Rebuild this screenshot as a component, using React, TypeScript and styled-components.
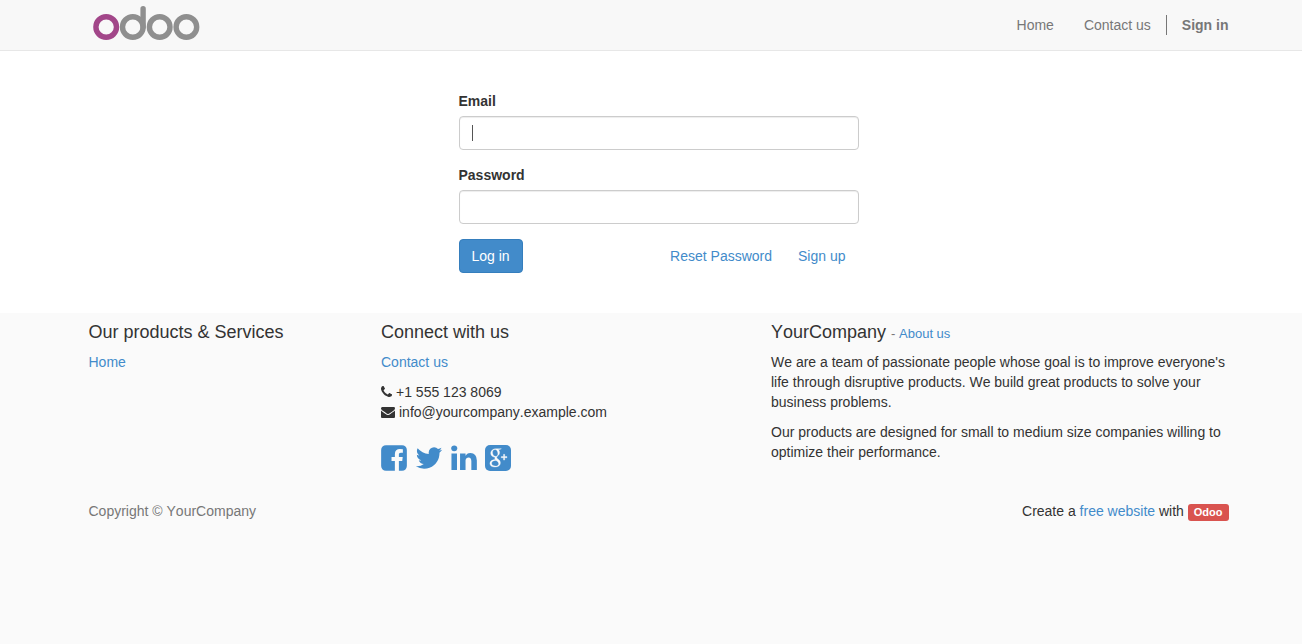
import React from 'react';
import styled, { createGlobalStyle } from 'styled-components';

const GlobalStyle = createGlobalStyle`
  *, *::before, *::after { box-sizing: border-box; }
  html { background: #fafafa; }
  body {
    margin: 0;
    font-family: "Liberation Sans", Arial, sans-serif;
    font-size: 14px;
    line-height: 20px;
    font-kerning: none;
    color: #333;
  }
`;

const Page = styled.div`
  display: flex;
  flex-direction: column;
  min-height: 100vh;
  background: #fafafa;
`;

const Gutter = styled.div`
  padding-left: 15px;
`;

const Container = styled.div`
  max-width: 1170px;
  margin: 0 auto;
  padding: 0 15px;
`;

const Header = styled.header`
  background: #f8f8f8;
  border-bottom: 1px solid #e7e7e7;
`;

const HeaderBar = styled(Container)`
  display: flex;
  flex-wrap: wrap;
  align-items: center;
  justify-content: space-between;
  min-height: 50px;
`;

const Brand = styled.a`
  display: block;
  padding: 0 4px;
  line-height: 0;
`;

const Nav = styled.nav`
  display: flex;
  align-items: center;
  margin-right: -15px;
`;

const NavLink = styled.a<{ $strong?: boolean }>`
  padding: 0 15px;
  color: #777;
  text-decoration: none;
  font-weight: ${(p) => (p.$strong ? 700 : 400)};
  border-left: ${(p) => (p.$strong ? '1px solid #777' : '0')};
`;

const Main = styled.main`
  background: #fff;
  padding: 40px 0;
`;

const LoginForm = styled.form`
  max-width: 400px;
  margin: 0 auto;
`;

const Field = styled.div`
  margin-bottom: 15px;
`;

const Label = styled.label`
  display: block;
  margin-bottom: 5px;
  font-weight: 700;
`;

const Input = styled.input`
  display: block;
  width: 100%;
  height: 34px;
  padding: 6px 12px;
  font: inherit;
  color: #555;
  background: #fff;
  border: 1px solid #ccc;
  border-radius: 4px;
  box-shadow: inset 0 1px 1px rgba(0, 0, 0, 0.075);
  outline: 0;
`;

const InputWrap = styled.div`
  position: relative;
`;

const Caret = styled.span`
  position: absolute;
  left: 13px;
  top: 9px;
  width: 1px;
  height: 16px;
  background: #555;
`;

const Actions = styled.div`
  display: flex;
  align-items: center;
  justify-content: space-between;
`;

const Button = styled.button`
  padding: 6px 12px;
  font: inherit;
  color: #fff;
  background: #428bca;
  border: 1px solid #357ebd;
  border-radius: 4px;
  cursor: pointer;
`;

const Link = styled.a`
  color: #428bca;
  text-decoration: none;
`;

const ActionLinks = styled.div`
  display: flex;
  gap: 26px;
  padding-right: 13px;
`;

const Footer = styled.footer`
  flex: 1;
`;

const Columns = styled.div`
  display: grid;
  grid-template-columns: 3fr 4fr 5fr;
  margin: 0 -15px;
`;

const Column = styled.section`
  padding: 0 15px;
`;

const Heading = styled.h4`
  margin: 9px 0 10px;
  font-size: 18px;
  line-height: 20px;
  font-weight: 400;
`;

const Small = styled.small`
  font-size: 13px;
  line-height: 1;
  color: #777;
`;

const Text = styled.p`
  margin: 0 0 10px;
`;

const Contact = styled.div`
  display: flex;
  align-items: center;
  gap: 4px;
`;

const Social = styled.div`
  display: flex;
  gap: 8px;
  margin-top: 21px;
`;

const SocialLink = styled.a`
  display: block;
  height: 30px;
  line-height: 0;
  color: #428bca;
`;

const Bottom = styled.div`
  display: flex;
  flex-wrap: wrap;
  justify-content: space-between;
  margin-top: 28px;
`;

const Muted = styled.span`
  color: #777;
`;

const Badge = styled.a`
  display: inline-block;
  padding: 3px 6px;
  font-size: 11px;
  line-height: 11px;
  font-weight: 700;
  color: #fff;
  background: #d9534f;
  border-radius: 3px;
  text-decoration: none;
`;

const PHONE =
  'M1408 1240q0 27-10 70.5t-21 68.5q-21 50-122 106-94 51-186 51-27 0-53-3.5t-57.5-12.5-47-14.5-55.5-20.5-49-18q-98-35-175-83-127-79-264-216t-216-264q-48-77-83-175-3-9-18-49t-20.5-55.5-14.5-47-12.5-57.5-3.5-53q0-92 51-186 56-101 106-122 25-11 68.5-21t70.5-10q14 0 21 3 18 6 53 76 11 19 30 54t35 63.5 31 53.5q3 4 17.5 25t21.5 35.5 7 28.5q0 20-28.5 50t-62 55-62 53-28.5 46q0 9 5 22.5t8.5 20.5 14 24 11.5 19q76 137 174 235t235 174q2 1 19 11.5t24 14 20.5 8.5 22.5 5q18 0 46-28.5t53-62 55-62 50-28.5q14 0 28.5 7t35.5 21.5 25 17.5q25 15 53.5 31t63.5 35 54 30q70 35 76 53 3 7 3 21z';
const ENVELOPE =
  'M1792 710v794q0 66-47 113t-113 47h-1472q-66 0-113-47t-47-113v-794q44 49 101 87 362 246 497 345 57 42 92.5 65.5t94.5 48 110 24.5h2q51 0 110-24.5t94.5-48 92.5-65.5q170-123 498-345 57-39 100-87zm0-294q0 79-49 151t-122 123q-376 261-468 325-10 7-42.5 31t-54 38.5-52 32.5-57.5 27-50 9h-2q-23 0-50-9t-57.5-27-52-32.5-54-38.5-42.5-31q-91-64-262-182.5t-205-142.5q-62-42-117-115.5t-55-136.5q0-78 41.5-130t118.5-52h1472q65 0 112.5 47t47.5 113z';
const FACEBOOK =
  'M1376 128q119 0 203.5 84.5t84.5 203.5v960q0 119-84.5 203.5t-203.5 84.5h-188v-595h199l30-232h-229v-148q0-56 23.5-84t91.5-28l122-1v-207q-63-9-178-9-136 0-217.5 80t-81.5 226v171h-200v232h200v595h-532q-119 0-203.5-84.5t-84.5-203.5v-960q0-119 84.5-203.5t203.5-84.5h960z';
const TWITTER =
  'M1684 408q-67 98-162 167 1 14 1 42 0 130-38 259.5t-115.5 248.5-184.5 210.5-258 146-323 54.5q-271 0-496-145 35 4 78 4 225 0 401-138-105-2-188-64.5t-114-159.5q33 5 61 5 43 0 85-11-112-23-185.5-111.5t-73.5-205.5v-4q68 38 146 41-66-44-105-115t-39-154q0-88 44-163 121 149 294.5 238.5t371.5 99.5q-8-38-8-74 0-134 94.5-228.5t228.5-94.5q140 0 236 102 109-21 205-78-37 115-142 178 93-10 186-50z';
const LINKEDIN =
  'M477 625v991h-330v-991h330zm21-306q1 73-50.5 122t-135.5 49h-2q-82 0-132-49t-50-122q0-74 51.5-122.5t134.5-48.5 133 48.5 51 122.5zm1166 729v568h-329v-530q0-105-40.5-164.5t-126.5-59.5q-63 0-105.5 34.5t-63.5 85.5q-11 30-11 81v553h-329q2-399 2-647t-1-296l-1-48h329v144h-2q20-32 41-56t56.5-52 87-43.5 114.5-15.5q171 0 275 113.5t104 332.5z';

type IconProps = { path: string; viewBox: string; width: number; height: number };

const Icon = ({ path, viewBox, width, height }: IconProps) => (
  <svg viewBox={viewBox} width={width} height={height} fill="currentColor" aria-hidden="true">
    <path d={path} />
  </svg>
);

const GooglePlus = () => (
  <svg viewBox="0 0 26 30" width="26" height="30" aria-hidden="true">
    <rect x="0" y="2" width="26" height="26" rx="5" fill="currentColor" />
    {/* Each bowl is an outer shape with a tilted counter cut out of it. */}
    <g fill="#fafafa" fillRule="evenodd" stroke="#fafafa" strokeWidth="0.3">
      <path d="M16.400 5.700H11C8 5.700 5.700 7.700 5.700 10.300C5.700 12.600 7.500 14.200 10 14.200C9.600 15.200 9.800 15.900 10.400 16.600C7.500 16.700 4.900 18 4.900 20.500C4.900 22.900 7.200 24 9.900 24C13.400 24 15.400 22.200 15.400 19.900C15.400 18.200 14.600 17.200 13.200 16.200C12.200 15.400 11.700 15 11.700 14.500C11.700 13.900 12.100 13.500 12.800 12.900C13.900 12 14.600 11.100 14.600 9.600C14.600 8.200 14 7.200 13.100 6.500H14.800ZM10.200 6.500C12 6.500 12.900 8.800 12.900 10.700C12.900 12.300 12 13.300 10.500 13.300C8.600 13.300 7.500 11.100 7.500 9.200C7.500 7.500 8.500 6.500 10.200 6.500ZM11 17.400C12.800 18.700 13.700 19.300 13.700 20.700C13.700 22.100 12.600 23.100 10.400 23.100C8.100 23.100 6.600 22 6.600 20.300C6.600 18.300 8.500 17.400 11 17.400Z" />
      <path d="M18.500 11.300h1.200v2.300H22v1.200h-2.300v2.300h-1.200v-2.300h-2.300v-1.200h2.300z" />
    </g>
  </svg>
);

const Logo = () => (
  <svg viewBox="0 0 108 40" width="108" height="40" role="img" aria-label="Odoo">
    <g fill="none" strokeWidth="5.400">
      <circle cx="13.200" cy="22" r="10.300" stroke="#a24689" />
      <g stroke="#8f8f8f">
        <circle cx="39.800" cy="22" r="10.300" />
        <circle cx="66.700" cy="22" r="10.300" />
        <circle cx="93.400" cy="22" r="10.300" />
        <path d="M50.100 22V3.700" strokeLinecap="round" />
      </g>
    </g>
  </svg>
);

export default function App() {
  return (
    <Page>
      <GlobalStyle />
      <Header>
        <Gutter>
          <HeaderBar>
            <Brand href="#"><Logo /></Brand>
            <Nav>
              <NavLink href="#">Home</NavLink>
              <NavLink href="#">Contact us</NavLink>
              <NavLink href="#" $strong>Sign in</NavLink>
            </Nav>
          </HeaderBar>
        </Gutter>
      </Header>
      <Main>
        <Gutter>
          <LoginForm onSubmit={(e) => e.preventDefault()}>
            <Field>
              <Label htmlFor="email">Email</Label>
              <InputWrap>
                <Input id="email" type="text" />
                <Caret />
              </InputWrap>
            </Field>
            <Field>
              <Label htmlFor="password">Password</Label>
              <Input id="password" type="password" />
            </Field>
            <Actions>
              <Button type="submit">Log in</Button>
              <ActionLinks>
                <Link href="#">Reset Password</Link>
                <Link href="#">Sign up</Link>
              </ActionLinks>
            </Actions>
          </LoginForm>
        </Gutter>
      </Main>
      <Footer>
        <Gutter>
          <Container>
            <Columns>
              <Column>
                <Heading>Our products &amp; Services</Heading>
                <Link href="#">Home</Link>
              </Column>
              <Column>
                <Heading>Connect with us</Heading>
                <Text><Link href="#">Contact us</Link></Text>
                <Contact>
                  <Icon path={PHONE} viewBox="0 128 1408 1536" width={11} height={12} />
                  <span>+1 555 123 8069</span>
                </Contact>
                <Contact>
                  <Icon path={ENVELOPE} viewBox="0 128 1792 1536" width={14} height={12} />
                  <span>info@yourcompany.example.com</span>
                </Contact>
                <Social>
                  <SocialLink href="#" aria-label="Facebook">
                    <Icon path={FACEBOOK} viewBox="128 0 1536 1792" width={26} height={30} />
                  </SocialLink>
                  <SocialLink href="#" aria-label="Twitter">
                    <Icon path={TWITTER} viewBox="64 0 1664 1792" width={28} height={30} />
                  </SocialLink>
                  <SocialLink href="#" aria-label="LinkedIn">
                    <Icon path={LINKEDIN} viewBox="128 0 1536 1792" width={26} height={30} />
                  </SocialLink>
                  <SocialLink href="#" aria-label="Google Plus"><GooglePlus /></SocialLink>
                </Social>
              </Column>
              <Column>
                <Heading>
                  YourCompany <Small>- <Link href="#">About us</Link></Small>
                </Heading>
                <Text>
                  We are a team of passionate people whose goal is to improve everyone's life
                  through disruptive products. We build great products to solve your business
                  problems.
                </Text>
                <Text>
                  Our products are designed for small to medium size companies willing to optimize
                  their performance.
                </Text>
              </Column>
            </Columns>
            <Bottom>
              <Muted>Copyright © YourCompany</Muted>
              <span>
                Create a <Link href="#">free website</Link> with <Badge href="#">Odoo</Badge>
              </span>
            </Bottom>
          </Container>
        </Gutter>
      </Footer>
    </Page>
  );
}
